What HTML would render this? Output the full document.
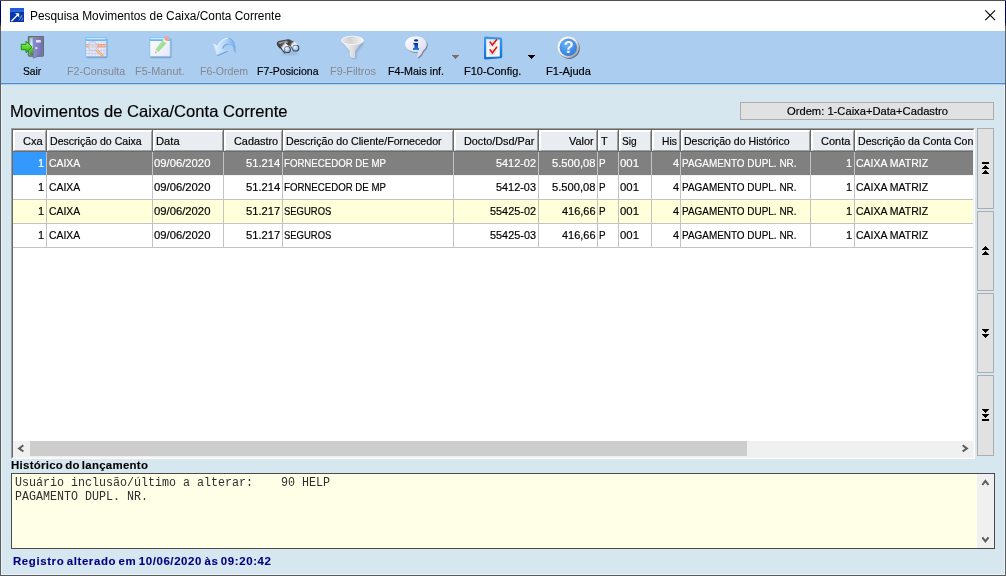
<!DOCTYPE html>
<html lang="pt-BR"><head><meta charset="utf-8"><title>Pesquisa Movimentos de Caixa/Conta Corrente</title>
<style>
html,body{margin:0;padding:0}
body{width:1006px;height:576px;overflow:hidden;position:relative;background:#d7e7f0;font-family:"Liberation Sans",sans-serif}
.a{position:absolute}
.hc{position:absolute;top:130px;height:21px;background:#e9edf1;box-sizing:border-box;border-top:2px solid #fff;border-left:2px solid #fff;border-right:1px solid #a0a0a0;border-bottom:1px solid #a0a0a0}
.vg{position:absolute;top:152px;height:96px;width:1px;background:#c3c3c3}
.hg{position:absolute;left:13px;width:960px;height:1px;background:#c3c3c3}
.nb{position:absolute;left:977px;width:17px;box-sizing:border-box;border:1px solid #adadad;background:#e1e1e1}
</style></head>
<body>
<div class="a" style="left:0;top:0;width:1006px;height:31px;background:#fff"></div>
<div class="a" style="left:0;top:31px;width:1006px;height:52px;background:#abcdf0"></div>
<div class="a" style="left:0;top:82px;width:1006px;height:1px;background:#b3d3f5"></div>
<div class="a" style="left:0;top:83px;width:1006px;height:1px;background:#4a8dc8"></div>
<div class="a" style="left:0;top:84px;width:1006px;height:1px;background:#b4d1ec"></div>
<svg class="a" style="left:0;top:0" width="1006" height="84" viewBox="0 0 1006 84">
<defs>
<linearGradient id="gApp" x1="0" y1="0" x2="0" y2="1"><stop offset="0" stop-color="#1f57cf"/><stop offset=".27" stop-color="#2c68db"/><stop offset=".3" stop-color="#0737ab"/><stop offset="1" stop-color="#0433a6"/></linearGradient>
<linearGradient id="gDoor" x1="0" y1="0" x2="1" y2="0"><stop offset="0" stop-color="#8d8fd0"/><stop offset="1" stop-color="#6e70b2"/></linearGradient>
<linearGradient id="gArr" x1="0" y1="0" x2="0" y2="1"><stop offset="0" stop-color="#9cf06a"/><stop offset="1" stop-color="#2fb414"/></linearGradient>
<linearGradient id="gSky" x1="0" y1="0" x2="0" y2="1"><stop offset="0" stop-color="#8fd0f6"/><stop offset=".55" stop-color="#f2fbff"/><stop offset=".6" stop-color="#6ed23a"/><stop offset="1" stop-color="#1d9a10"/></linearGradient>
<linearGradient id="gWin" x1="0" y1="0" x2="1" y2="1"><stop offset="0" stop-color="#ffffff"/><stop offset="1" stop-color="#ece8fb"/></linearGradient>
<linearGradient id="gPen" x1="0" y1="0" x2="1" y2="1"><stop offset="0" stop-color="#c6f2b4"/><stop offset="1" stop-color="#7fd56d"/></linearGradient>
<linearGradient id="gUndo" x1="0" y1="0" x2="1" y2="0"><stop offset="0" stop-color="#e2f0fd"/><stop offset=".55" stop-color="#b4d7fa"/><stop offset="1" stop-color="#74aef0"/></linearGradient>
<linearGradient id="gFun" x1="0" y1="0" x2="1" y2="0"><stop offset="0" stop-color="#f4f4f4"/><stop offset=".45" stop-color="#e3e3e3"/><stop offset="1" stop-color="#b7bbc1"/></linearGradient>
<linearGradient id="gFunIn" x1="0" y1="0" x2="1" y2="0"><stop offset="0" stop-color="#e6e6e6"/><stop offset=".4" stop-color="#d2d2d2"/><stop offset="1" stop-color="#f6f6f6"/></linearGradient>
<radialGradient id="gLens" cx=".4" cy=".35" r=".7"><stop offset="0" stop-color="#e8f4ff"/><stop offset="1" stop-color="#7fb8f2"/></radialGradient>
<linearGradient id="gBub" x1="0" y1="0" x2="1" y2="1"><stop offset="0" stop-color="#ffffff"/><stop offset="1" stop-color="#d6d3f6"/></linearGradient>
<linearGradient id="gI" x1="0" y1="0" x2="0" y2="1"><stop offset="0" stop-color="#062a9a"/><stop offset="1" stop-color="#1a86ea"/></linearGradient>
<radialGradient id="gHelp" cx=".4" cy=".35" r=".8"><stop offset="0" stop-color="#6db0f4"/><stop offset="1" stop-color="#2274dc"/></radialGradient>
<linearGradient id="gRing" x1="0" y1="0" x2="1" y2="1"><stop offset="0" stop-color="#ffffff"/><stop offset=".5" stop-color="#ece9e1"/><stop offset="1" stop-color="#8d8b87"/></linearGradient>
<linearGradient id="gChk" x1="0" y1="0" x2="0" y2="1"><stop offset="0" stop-color="#3b9cec"/><stop offset="1" stop-color="#0f6fd6"/></linearGradient>
<filter id="b4" x="-20%" y="-20%" width="140%" height="140%"><feGaussianBlur stdDeviation="0.45"/></filter>
<filter id="b7" x="-20%" y="-20%" width="140%" height="140%"><feGaussianBlur stdDeviation="0.8"/></filter>
<linearGradient id="gBarL" gradientUnits="userSpaceOnUse" x1="279.6" y1="43.2" x2="287.3" y2="49.6"><stop offset="0" stop-color="#3f3f41"/><stop offset=".3" stop-color="#5a5a5c"/><stop offset=".48" stop-color="#e4e4e4"/><stop offset=".8" stop-color="#ffffff"/><stop offset="1" stop-color="#d0d0d0"/></linearGradient>
<linearGradient id="gBarR" gradientUnits="userSpaceOnUse" x1="288.6" y1="41.6" x2="295.9" y2="48"><stop offset="0" stop-color="#3f3f41"/><stop offset=".3" stop-color="#5a5a5c"/><stop offset=".48" stop-color="#e4e4e4"/><stop offset=".8" stop-color="#ffffff"/><stop offset="1" stop-color="#d0d0d0"/></linearGradient>
</defs>

<!-- app icon -->
<rect x="10" y="8" width="14" height="14" fill="url(#gApp)"/>
<path d="M11.3 21.3 L17.6 15" stroke="#fff" stroke-width="1.3" fill="none"/>
<path d="M15.2 13.2 H19.2 V17.6 Z" fill="#fff"/>
<path d="M19 20.5l3-4.6M21.6 21l1.4-3.2M20.2 17.4l2.2-2.6" stroke="#9fbcf0" stroke-width=".9" opacity=".75" fill="none"/>
<!-- close X -->
<path d="M985.3 10.3 L995.1 20.1 M995.1 10.3 L985.3 20.1" stroke="#000" stroke-width="1.1" fill="none"/>

<!-- Sair : door -->
<g>
<path d="M29.2 37.2 h14 v18.6 l-1.2 1 h-12.8 z" fill="#7d7d80" filter="url(#b4)"/>
<rect x="27.8" y="35.9" width="16.2" height="20.6" rx="1" fill="#6a6a6d"/>
<rect x="29.2" y="37.2" width="13.6" height="18.2" fill="#a4a4a8"/>
<rect x="30.2" y="38.2" width="4" height="17" fill="url(#gSky)"/>
<path d="M33.2 38.3 L42.3 37.4 L42.3 54.6 L33.2 58.2 Z" fill="url(#gDoor)"/>
<path d="M33.2 38.3 L42.3 37.4 L42.3 54.6 L33.2 58.2 Z" fill="none" stroke="#6465aa" stroke-width=".6"/>
<rect x="36" y="40.1" width="4.8" height="2.4" fill="#e9e9fb"/>
<circle cx="36.4" cy="48.2" r="1.1" fill="#e5e4d6"/>
<path d="M21.3 44.3 H26 V41.2 L32.2 47 L26 52.8 V49.7 H21.3 Z" fill="url(#gArr)" stroke="#0f9a06" stroke-width="1" stroke-linejoin="round"/>
</g>

<!-- F2 Consulta : table + magnifier (disabled/faded) -->
<g opacity=".93">
<rect x="86.4" y="38.4" width="21.2" height="19.8" rx="1" fill="#7d93ad" opacity=".75" filter="url(#b4)"/>
<rect x="85.2" y="37" width="21.6" height="20" rx="1.2" fill="#7fc3fb"/>
<rect x="86.2" y="39.3" width="19.6" height="1.7" fill="#6ab6f6"/><rect x="86.6" y="38.2" width="18.6" height="1" fill="#e8f5ff"/>
<rect x="86.2" y="41" width="19.6" height="15" fill="#f4f0fd"/>
<g stroke="#cfcdea" stroke-width=".9">
<path d="M86.2 47.6h19.6M86.2 50.6h19.6M86.2 53.6h19.6M89.2 41v15M92.2 41v15M95.2 41v15M98.2 41v15M101.2 41v15M104 41v15"/>
</g>
<rect x="86.2" y="44" width="19.6" height="3.2" fill="#fb9a7c"/>
<g fill="#fbd9a0"><rect x="87" y="45" width="1.6" height="1.4"/><rect x="90" y="45" width="1.6" height="1.4"/><rect x="93" y="45" width="1.6" height="1.4"/><rect x="96" y="45" width="1.6" height="1.4"/><rect x="99" y="45" width="1.6" height="1.4"/><rect x="102" y="45" width="1.6" height="1.4"/><rect x="104.6" y="45" width="1" height="1.4"/></g>
<path d="M97.4 50.8 L102.3 55.3" stroke="#f3a565" stroke-width="2.5" stroke-linecap="round"/>
<path d="M97.6 51 L102.1 55.1" stroke="#fde29a" stroke-width=".9" stroke-linecap="round"/>
<circle cx="92.7" cy="46.2" r="4.6" fill="#d6eafb" fill-opacity=".66" stroke="#c3c6d0" stroke-width="1"/>
</g>

<!-- F5 Manut : window + pencil -->
<g opacity=".95">
<rect x="150.4" y="38.4" width="21.2" height="19.8" rx="1" fill="#7d93ad" opacity=".75" filter="url(#b4)"/>
<rect x="149.2" y="37" width="21.6" height="20" rx="1.2" fill="#86c7fc"/>
<rect x="150.2" y="39.3" width="19.6" height="1.7" fill="#63b3f6"/><rect x="150.6" y="38.2" width="18.6" height="1" fill="#e8f5ff"/>
<rect x="150.2" y="41" width="19.6" height="15" fill="url(#gWin)"/>
<path d="M155.9 49.4 L158.5 51.4 L155.1 53.3 Z" fill="#e8e2d2"/>
<path d="M155.1 53.3 l.5 -1.5 l1 .8 z" fill="#8a8a8a"/>
<path d="M155.9 49.4 L162.7 40.3 L166.3 43.2 L158.5 51.4 Z" fill="url(#gPen)" stroke="#9fdc90" stroke-width=".5"/>
<path d="M162.7 40.3 L164 38.7 L167.6 41.6 L166.3 43.2 Z" fill="#f7f7f7"/>
<ellipse cx="166.7" cy="38.6" rx="2.7" ry="2.2" transform="rotate(38 166.7 38.7)" fill="#f1a590"/>
</g>

<!-- F6 Ordem : undo arrow (faded) -->
<g>
<path d="M217.6 46.2 C219.5 41 224 38 228.4 38 C232.8 38.2 235.8 42.6 234.4 53 C233.6 47.6 231.6 43.6 227.6 43.6 C224.8 43.8 222.8 45.8 222 48.4 L227.4 50.6 L216.6 55.2 L213.2 43.4 Z" fill="#5a8bc8" opacity=".75" filter="url(#b4)" transform="translate(.8 1)"/>
<path d="M217.6 46.2 C219.5 41 224 38 228.4 38 C232.8 38.2 235.8 42.6 234.4 53 C233.6 47.6 231.6 43.6 227.6 43.6 C224.8 43.8 222.8 45.8 222 48.4 L227.4 50.6 L216.6 55.2 L213.2 43.4 Z" fill="url(#gUndo)" stroke="#a9d0f8" stroke-width=".5"/>
<path d="M228.4 38.3 C232.6 38.6 235.4 42.8 234.3 51.5" fill="none" stroke="#74abe9" stroke-width=".9"/>
<path d="M213.6 44 L217.4 46.6 C219.6 41.4 223.6 38.6 228 38.4" fill="none" stroke="#f4f9ff" stroke-width=".9"/>
</g>

<!-- F7 Posiciona : binoculars -->
<g>
<ellipse cx="290" cy="53.6" rx="8.5" ry="1.5" fill="#5d7fa8" opacity=".3" filter="url(#b7)"/>
<path d="M276.9 45 Q276.2 41.4 279.8 40.8 L286.6 39.4 Q289.8 39.1 291.8 40.8 L294 43.4 L285 47.8 L279.6 48.4 Z" fill="#454547"/>
<path d="M278.4 42.6 L286.6 40.6 L289 42.2 L280.2 46 Z" fill="#8e8e90"/>
<path d="M279.4 43 L285.8 41.6 L286.8 42.2 L280 44.2 Z" fill="#b9b9bb"/>
<path d="M288.2 41.8 L293.2 40.8 L299.4 46.2 L294 52 L289.6 46.6 Z" fill="url(#gBarR)"/>
<path d="M278.6 44.6 L284.2 42 L291 48 L285.2 53.6 L280.4 48.2 Z" fill="url(#gBarL)"/>
<path d="M278.4 44.8 L285 53.4" stroke="#3a3a3c" stroke-width="1.1" fill="none"/>
<path d="M288.6 42 L293.6 51.6" stroke="#3a3a3c" stroke-width="1" fill="none" opacity=".8"/>
<circle cx="287.5" cy="49.7" r="3.4" fill="#3c3c3e"/>
<circle cx="295.9" cy="48.2" r="3.4" fill="#3c3c3e"/>
<circle cx="287.2" cy="49.4" r="2.7" fill="url(#gLens)"/>
<circle cx="295.6" cy="47.9" r="2.7" fill="url(#gLens)"/>
</g>

<!-- F9 Filtros : funnel (faded white) -->
<g>
<path d="M342 41.6 L350.4 51.6 V57 Q352.6 58.8 355.4 57.6 V51.6 L363.6 41.6 Z" fill="#7391b3" opacity=".6" filter="url(#b7)" transform="translate(1 1)"/>
<path d="M341.4 40.6 L349.9 51.2 V56.6 Q352.4 58.8 355.1 57.4 V51.2 L363.4 40.6 Z" fill="url(#gFun)"/>
<ellipse cx="352.4" cy="40.4" rx="11" ry="4.2" fill="url(#gFunIn)" stroke="#f6f6f6" stroke-width=".9"/>
</g>

<!-- F4 Mais inf : speech bubble with i -->
<g>
<path d="M416 36.2 C422.4 36.2 426.8 39.8 426.8 44 C426.8 47.4 424.6 49.6 422.8 51 C421.6 54.6 419.2 57 416.6 57.8 C418 55.8 418.4 53.6 417.6 51.8 C410 52.6 405.2 48.6 405.2 44 C405.2 39.8 409.6 36.2 416 36.2 Z" fill="#64676f" opacity=".75" filter="url(#b4)" transform="translate(.9 .9)"/>
<path d="M416 36.2 C422.4 36.2 426.8 39.8 426.8 44 C426.8 47.4 424.6 49.6 422.8 51 C421.6 54.6 419.2 57 416.6 57.8 C418 55.8 418.4 53.6 417.6 51.8 C410 52.6 405.2 48.6 405.2 44 C405.2 39.8 409.6 36.2 416 36.2 Z" fill="url(#gBub)"/>
<ellipse cx="416.1" cy="40.4" rx="2.1" ry="1.2" fill="#0a2c9c"/>
<path d="M413.4 43 H418 V48 H419 V50 H413 V48 H414.4 V44.6 H413.4 Z" fill="url(#gI)"/>
</g>

<!-- F10 Config : checklist -->
<g>
<path d="M485 36.6 L500.6 37.6 Q502.2 37.8 502.2 39.4 V56.4 Q502.2 58 500.6 58.2 L485.6 59.6 Q484 59.6 484 58 V38 Q484 36.6 485 36.6 Z" fill="url(#gChk)"/>
<path d="M486.2 39.2 L499.8 39.8 V56.4 L486.2 57 Z" fill="#f7f5f3"/>
<path d="M486.2 39.2 L499.8 39.8 V41 L486.2 40.4 Z" fill="#e4e0dc"/>
<rect x="489.6" y="41.4" width="5.6" height="4.8" rx="1" fill="#efefef" stroke="#c9c9c9" stroke-width=".6"/>
<rect x="489.6" y="49.6" width="5.6" height="4.8" rx="1" fill="#efefef" stroke="#c9c9c9" stroke-width=".6"/>
<path d="M489.8 41.6 L492.4 45 L497 39.2" fill="none" stroke="#e01010" stroke-width="1.5"/>
<path d="M489.8 49.4 L492.4 53 L497 46.8" fill="none" stroke="#e01010" stroke-width="1.5"/>
</g>

<!-- F1 Ajuda : help circle -->
<g>
<circle cx="569.2" cy="48.3" r="10.7" fill="#4f5966" opacity=".75" filter="url(#b4)"/>
<circle cx="568.3" cy="47.3" r="10.7" fill="url(#gRing)"/>
<circle cx="568.3" cy="47.3" r="8.7" fill="url(#gHelp)"/>
<text x="568.5" y="53.2" text-anchor="middle" font-family="'Liberation Sans',sans-serif" font-weight="bold" font-size="16.5" fill="#f6f4ff">?</text>
</g>
</svg>

<div class="a" style="left:11px;top:128px;width:964px;height:331px;background:#fff;box-sizing:border-box;border:1px solid;border-color:#a0a0a0 #fff #fff #a0a0a0"></div>
<div class="a" style="left:12px;top:129px;width:962px;height:329px;box-sizing:border-box;border:1px solid;border-color:#696969 #f4f4f4 #f4f4f4 #696969"></div>
<div class="a" style="left:13px;top:130px;width:960px;height:22px;background:#6b6b6b"></div>
<div class="hc" style="left:13px;width:33px"></div>
<div class="hc" style="left:47px;width:105px"></div>
<div class="hc" style="left:153px;width:70px"></div>
<div class="hc" style="left:224px;width:58px"></div>
<div class="hc" style="left:283px;width:170px"></div>
<div class="hc" style="left:454px;width:84px"></div>
<div class="hc" style="left:539px;width:58px"></div>
<div class="hc" style="left:598px;width:20px"></div>
<div class="hc" style="left:619px;width:32px"></div>
<div class="hc" style="left:652px;width:28px"></div>
<div class="hc" style="left:681px;width:129px"></div>
<div class="hc" style="left:811px;width:43px"></div>
<div class="hc" style="left:855px;width:118px;border-right:none"></div>
<div class="a" style="left:13px;top:152px;width:960px;height:23px;background:#808080"></div>
<div class="a" style="left:13px;top:152px;width:33px;height:23px;background:#3399ff"></div>
<div class="hg" style="top:175px;background:#f4f4f4"></div>
<div class="a" style="left:13px;top:176px;width:960px;height:23px;background:#fff"></div>
<div class="hg" style="top:199px"></div>
<div class="a" style="left:13px;top:200px;width:960px;height:23px;background:#ffffd9"></div>
<div class="hg" style="top:223px"></div>
<div class="a" style="left:13px;top:224px;width:960px;height:23px;background:#fff"></div>
<div class="hg" style="top:247px"></div>
<div class="vg" style="left:46px"></div>
<div class="vg" style="left:152px"></div>
<div class="vg" style="left:223px"></div>
<div class="vg" style="left:282px"></div>
<div class="vg" style="left:453px"></div>
<div class="vg" style="left:538px"></div>
<div class="vg" style="left:597px"></div>
<div class="vg" style="left:618px"></div>
<div class="vg" style="left:651px"></div>
<div class="vg" style="left:680px"></div>
<div class="vg" style="left:810px"></div>
<div class="vg" style="left:854px"></div>
<div class="a" style="left:13px;top:441px;width:960px;height:16px;background:#f0f0f0"></div>
<div class="a" style="left:30px;top:441px;width:717px;height:15px;background:#cdcdcd"></div>
<svg class="a" style="left:13px;top:440px" width="17" height="17" viewBox="0 0 17 17"><path d="M10.4 5.3 L6.1 8.4 L10.4 11.5" fill="none" stroke="#5c5c5c" stroke-width="2"/></svg>
<svg class="a" style="left:956px;top:440px" width="17" height="17" viewBox="0 0 17 17"><path d="M6.6 5.3 L10.9 8.4 L6.6 11.5" fill="none" stroke="#5c5c5c" stroke-width="2"/></svg>
<div class="nb" style="top:128px;height:81px"></div>
<div class="nb" style="top:211px;height:80px"></div>
<div class="nb" style="top:293px;height:80px"></div>
<div class="nb" style="top:375px;height:81px"></div>
<svg class="a" style="left:0;top:0" width="1006" height="576" viewBox="0 0 1006 576" shape-rendering="crispEdges" fill="#000"><rect x="982" y="162" width="7" height="2"/><path d="M985 165h1v1h1v1h1v1h1v1h-7v-1h1v-1h1v-1h1z"/><path d="M985 170h1v1h1v1h1v1h1v1h-7v-1h1v-1h1v-1h1z"/><path d="M985 246h1v1h1v1h1v1h1v1h-7v-1h1v-1h1v-1h1z"/><path d="M985 251h1v1h1v1h1v1h1v1h-7v-1h1v-1h1v-1h1z"/><path d="M982 329h7v1h-1v1h-1v1h-1v1h-1v-1h-1v-1h-1v-1h-1z"/><path d="M982 334h7v1h-1v1h-1v1h-1v1h-1v-1h-1v-1h-1v-1h-1z"/><path d="M982 409h7v1h-1v1h-1v1h-1v1h-1v-1h-1v-1h-1v-1h-1z"/><path d="M982 414h7v1h-1v1h-1v1h-1v1h-1v-1h-1v-1h-1v-1h-1z"/><rect x="982" y="419" width="7" height="2"/><g fill="#76716c"><path d="M452 55h7v1h-1v1h-1v1h-1v1h-1v-1h-1v-1h-1v-1h-1z"/></g><path d="M528 55h7v1h-1v1h-1v1h-1v1h-1v-1h-1v-1h-1v-1h-1z"/></svg>
<div class="a" style="left:740px;top:102px;width:254px;height:18px;box-sizing:border-box;border:1px solid #adadad;background:#e1e1e1"></div>
<div class="a" style="left:11px;top:473px;width:984px;height:76px;box-sizing:border-box;border:1px solid #4b4b4b;background:#ffffe8"></div>
<div class="a" style="left:977px;top:474px;width:17px;height:74px;background:#f0f0f0"></div>
<svg class="a" style="left:977px;top:474px" width="17" height="74" viewBox="0 0 17 74"><path d="M5.3 11 L8.4 7 L11.5 11 M5.3 63.4 L8.4 67.4 L11.5 63.4" fill="none" stroke="#5c5c5c" stroke-width="2"/></svg>
<span style="font:normal 12px/16px 'Liberation Sans', sans-serif;color:#000;position:absolute;white-space:pre;left:30.3px;top:7.84px;transform:scaleX(0.9903);transform-origin:0 0;">Pesquisa Movimentos de Caixa/Conta Corrente</span>
<span style="font:normal 11px/15px 'Liberation Sans', sans-serif;color:#000;position:absolute;white-space:pre;left:23.2px;top:63.69px;transform:scaleX(0.9355);transform-origin:0 0;-webkit-text-stroke:.18px #000;">Sair</span>
<span style="font:normal 11px/15px 'Liberation Sans', sans-serif;color:#85878f;position:absolute;white-space:pre;left:67.2px;top:63.69px;transform:scaleX(0.9729);transform-origin:0 0;">F2-Consulta</span>
<span style="font:normal 11px/15px 'Liberation Sans', sans-serif;color:#85878f;position:absolute;white-space:pre;left:135.0px;top:63.69px;transform:scaleX(0.9872);transform-origin:0 0;">F5-Manut.</span>
<span style="font:normal 11px/15px 'Liberation Sans', sans-serif;color:#85878f;position:absolute;white-space:pre;left:200.4px;top:63.69px;transform:scaleX(0.9596);transform-origin:0 0;">F6-Ordem</span>
<span style="font:normal 11px/15px 'Liberation Sans', sans-serif;color:#000;position:absolute;white-space:pre;left:257.3px;top:63.69px;transform:scaleX(0.9579);transform-origin:0 0;-webkit-text-stroke:.18px #000;">F7-Posiciona</span>
<span style="font:normal 11px/15px 'Liberation Sans', sans-serif;color:#85878f;position:absolute;white-space:pre;left:329.9px;top:63.69px;transform:scaleX(0.9881);transform-origin:0 0;">F9-Filtros</span>
<span style="font:normal 11px/15px 'Liberation Sans', sans-serif;color:#000;position:absolute;white-space:pre;left:388.1px;top:63.69px;transform:scaleX(0.9762);transform-origin:0 0;-webkit-text-stroke:.18px #000;">F4-Mais inf.</span>
<span style="font:normal 11px/15px 'Liberation Sans', sans-serif;color:#000;position:absolute;white-space:pre;left:463.8px;top:63.69px;transform:scaleX(0.9985);transform-origin:0 0;-webkit-text-stroke:.18px #000;">F10-Config.</span>
<span style="font:normal 11px/15px 'Liberation Sans', sans-serif;color:#000;position:absolute;white-space:pre;left:546.0px;top:63.69px;transform:scaleX(1.0058);transform-origin:0 0;-webkit-text-stroke:.18px #000;">F1-Ajuda</span>
<span style="font:normal 16.5px/20.5px 'Liberation Sans', sans-serif;color:#000;position:absolute;white-space:pre;left:10.4px;top:100.63px;transform:scaleX(1.0053);transform-origin:0 0;-webkit-text-stroke:.18px #000;">Movimentos de Caixa/Conta Corrente</span>
<span style="font:normal 11px/15px 'Liberation Sans', sans-serif;color:#000;position:absolute;white-space:pre;left:787.0px;top:103.69px;transform:scaleX(1.0167);transform-origin:0 0;-webkit-text-stroke:.18px #000;">Ordem: 1-Caixa+Data+Cadastro</span>
<span style="font:normal 11px/15px 'Liberation Sans', sans-serif;color:#000;position:absolute;white-space:pre;left:22.9px;top:133.69px;transform:scaleX(1.0121);transform-origin:0 0;-webkit-text-stroke:.18px #000;">Cxa</span>
<span style="font:normal 11px/15px 'Liberation Sans', sans-serif;color:#000;position:absolute;white-space:pre;left:50.0px;top:133.69px;transform:scaleX(0.9615);transform-origin:0 0;-webkit-text-stroke:.18px #000;">Descrição do Caixa</span>
<span style="font:normal 11px/15px 'Liberation Sans', sans-serif;color:#000;position:absolute;white-space:pre;left:155.9px;top:133.69px;transform:scaleX(1.0151);transform-origin:0 0;-webkit-text-stroke:.18px #000;">Data</span>
<span style="font:normal 11px/15px 'Liberation Sans', sans-serif;color:#000;position:absolute;white-space:pre;left:234.4px;top:133.69px;transform:scaleX(0.9879);transform-origin:0 0;-webkit-text-stroke:.18px #000;">Cadastro</span>
<span style="font:normal 11px/15px 'Liberation Sans', sans-serif;color:#000;position:absolute;white-space:pre;left:285.9px;top:133.69px;transform:scaleX(0.9676);transform-origin:0 0;-webkit-text-stroke:.18px #000;">Descrição do Cliente/Fornecedor</span>
<span style="font:normal 11px/15px 'Liberation Sans', sans-serif;color:#000;position:absolute;white-space:pre;left:464.3px;top:133.69px;transform:scaleX(0.9842);transform-origin:0 0;-webkit-text-stroke:.18px #000;">Docto/Dsd/Par</span>
<span style="font:normal 11px/15px 'Liberation Sans', sans-serif;color:#000;position:absolute;white-space:pre;left:569.2px;top:133.69px;transform:scaleX(0.9889);transform-origin:0 0;-webkit-text-stroke:.18px #000;">Valor</span>
<span style="font:normal 11px/15px 'Liberation Sans', sans-serif;color:#000;position:absolute;white-space:pre;left:600.7px;top:133.69px;transform:scaleX(0.9800);transform-origin:0 0;-webkit-text-stroke:.18px #000;">T</span>
<span style="font:normal 11px/15px 'Liberation Sans', sans-serif;color:#000;position:absolute;white-space:pre;left:622.0px;top:133.69px;transform:scaleX(0.9242);transform-origin:0 0;-webkit-text-stroke:.18px #000;">Sig</span>
<span style="font:normal 11px/15px 'Liberation Sans', sans-serif;color:#000;position:absolute;white-space:pre;left:661.9px;top:133.69px;transform:scaleX(0.9377);transform-origin:0 0;-webkit-text-stroke:.18px #000;">His</span>
<span style="font:normal 11px/15px 'Liberation Sans', sans-serif;color:#000;position:absolute;white-space:pre;left:684.3px;top:133.69px;transform:scaleX(0.9596);transform-origin:0 0;-webkit-text-stroke:.18px #000;">Descrição do Histórico</span>
<span style="font:normal 11px/15px 'Liberation Sans', sans-serif;color:#000;position:absolute;white-space:pre;left:821.1px;top:133.69px;transform:scaleX(0.9980);transform-origin:0 0;-webkit-text-stroke:.18px #000;">Conta</span>
<div style="position:absolute;left:0;top:0;width:973.0px;height:576px;overflow:hidden"><span style="font:normal 11px/15px 'Liberation Sans', sans-serif;color:#000;position:absolute;white-space:pre;left:858.1px;top:133.69px;transform:scaleX(0.9629);transform-origin:0 0;-webkit-text-stroke:.18px #000;">Descrição da Conta Con</span></div>
<span style="font:normal 11px/15px 'Liberation Sans', sans-serif;color:#fff;position:absolute;white-space:pre;left:37.9px;top:155.69px;transform:scaleX(0.9959);transform-origin:0 0;-webkit-text-stroke:.18px #fff;">1</span>
<span style="font:normal 11px/15px 'Liberation Sans', sans-serif;color:#fff;position:absolute;white-space:pre;left:48.5px;top:155.69px;transform:scaleX(0.9450);transform-origin:0 0;-webkit-text-stroke:.18px #fff;">CAIXA</span>
<span style="font:normal 11px/15px 'Liberation Sans', sans-serif;color:#fff;position:absolute;white-space:pre;left:154.1px;top:155.69px;transform:scaleX(1.0243);transform-origin:0 0;-webkit-text-stroke:.18px #fff;">09/06/2020</span>
<span style="font:normal 11px/15px 'Liberation Sans', sans-serif;color:#fff;position:absolute;white-space:pre;left:246.2px;top:155.69px;transform:scaleX(1.0191);transform-origin:0 0;-webkit-text-stroke:.18px #fff;">51.214</span>
<span style="font:normal 11px/15px 'Liberation Sans', sans-serif;color:#fff;position:absolute;white-space:pre;left:284.3px;top:155.69px;transform:scaleX(0.8775);transform-origin:0 0;-webkit-text-stroke:.18px #fff;">FORNECEDOR DE MP</span>
<span style="font:normal 11px/15px 'Liberation Sans', sans-serif;color:#fff;position:absolute;white-space:pre;left:496.0px;top:155.69px;transform:scaleX(0.9907);transform-origin:0 0;-webkit-text-stroke:.18px #fff;">5412-02</span>
<span style="font:normal 11px/15px 'Liberation Sans', sans-serif;color:#fff;position:absolute;white-space:pre;left:551.5px;top:155.69px;transform:scaleX(1.0157);transform-origin:0 0;-webkit-text-stroke:.18px #fff;">5.500,08</span>
<span style="font:normal 11px/15px 'Liberation Sans', sans-serif;color:#fff;position:absolute;white-space:pre;left:599.0px;top:155.69px;transform:scaleX(0.8987);transform-origin:0 0;-webkit-text-stroke:.18px #fff;">P</span>
<span style="font:normal 11px/15px 'Liberation Sans', sans-serif;color:#fff;position:absolute;white-space:pre;left:620.1px;top:155.69px;transform:scaleX(1.0349);transform-origin:0 0;-webkit-text-stroke:.18px #fff;">001</span>
<span style="font:normal 11px/15px 'Liberation Sans', sans-serif;color:#fff;position:absolute;white-space:pre;left:672.7px;top:155.69px;transform:scaleX(0.9959);transform-origin:0 0;-webkit-text-stroke:.18px #fff;">4</span>
<span style="font:normal 11px/15px 'Liberation Sans', sans-serif;color:#fff;position:absolute;white-space:pre;left:682.4px;top:155.69px;transform:scaleX(0.9035);transform-origin:0 0;-webkit-text-stroke:.18px #fff;">PAGAMENTO DUPL. NR.</span>
<span style="font:normal 11px/15px 'Liberation Sans', sans-serif;color:#fff;position:absolute;white-space:pre;left:845.9px;top:155.69px;transform:scaleX(0.9959);transform-origin:0 0;-webkit-text-stroke:.18px #fff;">1</span>
<span style="font:normal 11px/15px 'Liberation Sans', sans-serif;color:#fff;position:absolute;white-space:pre;left:856.4px;top:155.69px;transform:scaleX(0.9551);transform-origin:0 0;-webkit-text-stroke:.18px #fff;">CAIXA MATRIZ</span>
<span style="font:normal 11px/15px 'Liberation Sans', sans-serif;color:#000;position:absolute;white-space:pre;left:37.9px;top:179.69px;transform:scaleX(0.9959);transform-origin:0 0;-webkit-text-stroke:.18px #000;">1</span>
<span style="font:normal 11px/15px 'Liberation Sans', sans-serif;color:#000;position:absolute;white-space:pre;left:48.5px;top:179.69px;transform:scaleX(0.9450);transform-origin:0 0;-webkit-text-stroke:.18px #000;">CAIXA</span>
<span style="font:normal 11px/15px 'Liberation Sans', sans-serif;color:#000;position:absolute;white-space:pre;left:154.1px;top:179.69px;transform:scaleX(1.0243);transform-origin:0 0;-webkit-text-stroke:.18px #000;">09/06/2020</span>
<span style="font:normal 11px/15px 'Liberation Sans', sans-serif;color:#000;position:absolute;white-space:pre;left:246.2px;top:179.69px;transform:scaleX(1.0191);transform-origin:0 0;-webkit-text-stroke:.18px #000;">51.214</span>
<span style="font:normal 11px/15px 'Liberation Sans', sans-serif;color:#000;position:absolute;white-space:pre;left:284.3px;top:179.69px;transform:scaleX(0.8775);transform-origin:0 0;-webkit-text-stroke:.18px #000;">FORNECEDOR DE MP</span>
<span style="font:normal 11px/15px 'Liberation Sans', sans-serif;color:#000;position:absolute;white-space:pre;left:496.0px;top:179.69px;transform:scaleX(0.9907);transform-origin:0 0;-webkit-text-stroke:.18px #000;">5412-03</span>
<span style="font:normal 11px/15px 'Liberation Sans', sans-serif;color:#000;position:absolute;white-space:pre;left:551.5px;top:179.69px;transform:scaleX(1.0157);transform-origin:0 0;-webkit-text-stroke:.18px #000;">5.500,08</span>
<span style="font:normal 11px/15px 'Liberation Sans', sans-serif;color:#000;position:absolute;white-space:pre;left:599.0px;top:179.69px;transform:scaleX(0.8987);transform-origin:0 0;-webkit-text-stroke:.18px #000;">P</span>
<span style="font:normal 11px/15px 'Liberation Sans', sans-serif;color:#000;position:absolute;white-space:pre;left:620.1px;top:179.69px;transform:scaleX(1.0349);transform-origin:0 0;-webkit-text-stroke:.18px #000;">001</span>
<span style="font:normal 11px/15px 'Liberation Sans', sans-serif;color:#000;position:absolute;white-space:pre;left:672.7px;top:179.69px;transform:scaleX(0.9959);transform-origin:0 0;-webkit-text-stroke:.18px #000;">4</span>
<span style="font:normal 11px/15px 'Liberation Sans', sans-serif;color:#000;position:absolute;white-space:pre;left:682.4px;top:179.69px;transform:scaleX(0.9035);transform-origin:0 0;-webkit-text-stroke:.18px #000;">PAGAMENTO DUPL. NR.</span>
<span style="font:normal 11px/15px 'Liberation Sans', sans-serif;color:#000;position:absolute;white-space:pre;left:845.9px;top:179.69px;transform:scaleX(0.9959);transform-origin:0 0;-webkit-text-stroke:.18px #000;">1</span>
<span style="font:normal 11px/15px 'Liberation Sans', sans-serif;color:#000;position:absolute;white-space:pre;left:856.4px;top:179.69px;transform:scaleX(0.9551);transform-origin:0 0;-webkit-text-stroke:.18px #000;">CAIXA MATRIZ</span>
<span style="font:normal 11px/15px 'Liberation Sans', sans-serif;color:#000;position:absolute;white-space:pre;left:37.9px;top:203.69px;transform:scaleX(0.9959);transform-origin:0 0;-webkit-text-stroke:.18px #000;">1</span>
<span style="font:normal 11px/15px 'Liberation Sans', sans-serif;color:#000;position:absolute;white-space:pre;left:48.5px;top:203.69px;transform:scaleX(0.9450);transform-origin:0 0;-webkit-text-stroke:.18px #000;">CAIXA</span>
<span style="font:normal 11px/15px 'Liberation Sans', sans-serif;color:#000;position:absolute;white-space:pre;left:154.1px;top:203.69px;transform:scaleX(1.0243);transform-origin:0 0;-webkit-text-stroke:.18px #000;">09/06/2020</span>
<span style="font:normal 11px/15px 'Liberation Sans', sans-serif;color:#000;position:absolute;white-space:pre;left:246.2px;top:203.69px;transform:scaleX(1.0191);transform-origin:0 0;-webkit-text-stroke:.18px #000;">51.217</span>
<span style="font:normal 11px/15px 'Liberation Sans', sans-serif;color:#000;position:absolute;white-space:pre;left:284.3px;top:203.69px;transform:scaleX(0.8598);transform-origin:0 0;-webkit-text-stroke:.18px #000;">SEGUROS</span>
<span style="font:normal 11px/15px 'Liberation Sans', sans-serif;color:#000;position:absolute;white-space:pre;left:490.0px;top:203.69px;transform:scaleX(0.9892);transform-origin:0 0;-webkit-text-stroke:.18px #000;">55425-02</span>
<span style="font:normal 11px/15px 'Liberation Sans', sans-serif;color:#000;position:absolute;white-space:pre;left:561.5px;top:203.69px;transform:scaleX(0.9954);transform-origin:0 0;-webkit-text-stroke:.18px #000;">416,66</span>
<span style="font:normal 11px/15px 'Liberation Sans', sans-serif;color:#000;position:absolute;white-space:pre;left:599.0px;top:203.69px;transform:scaleX(0.8987);transform-origin:0 0;-webkit-text-stroke:.18px #000;">P</span>
<span style="font:normal 11px/15px 'Liberation Sans', sans-serif;color:#000;position:absolute;white-space:pre;left:620.1px;top:203.69px;transform:scaleX(1.0349);transform-origin:0 0;-webkit-text-stroke:.18px #000;">001</span>
<span style="font:normal 11px/15px 'Liberation Sans', sans-serif;color:#000;position:absolute;white-space:pre;left:672.7px;top:203.69px;transform:scaleX(0.9959);transform-origin:0 0;-webkit-text-stroke:.18px #000;">4</span>
<span style="font:normal 11px/15px 'Liberation Sans', sans-serif;color:#000;position:absolute;white-space:pre;left:682.4px;top:203.69px;transform:scaleX(0.9035);transform-origin:0 0;-webkit-text-stroke:.18px #000;">PAGAMENTO DUPL. NR.</span>
<span style="font:normal 11px/15px 'Liberation Sans', sans-serif;color:#000;position:absolute;white-space:pre;left:845.9px;top:203.69px;transform:scaleX(0.9959);transform-origin:0 0;-webkit-text-stroke:.18px #000;">1</span>
<span style="font:normal 11px/15px 'Liberation Sans', sans-serif;color:#000;position:absolute;white-space:pre;left:856.4px;top:203.69px;transform:scaleX(0.9551);transform-origin:0 0;-webkit-text-stroke:.18px #000;">CAIXA MATRIZ</span>
<span style="font:normal 11px/15px 'Liberation Sans', sans-serif;color:#000;position:absolute;white-space:pre;left:37.9px;top:227.69px;transform:scaleX(0.9959);transform-origin:0 0;-webkit-text-stroke:.18px #000;">1</span>
<span style="font:normal 11px/15px 'Liberation Sans', sans-serif;color:#000;position:absolute;white-space:pre;left:48.5px;top:227.69px;transform:scaleX(0.9450);transform-origin:0 0;-webkit-text-stroke:.18px #000;">CAIXA</span>
<span style="font:normal 11px/15px 'Liberation Sans', sans-serif;color:#000;position:absolute;white-space:pre;left:154.1px;top:227.69px;transform:scaleX(1.0243);transform-origin:0 0;-webkit-text-stroke:.18px #000;">09/06/2020</span>
<span style="font:normal 11px/15px 'Liberation Sans', sans-serif;color:#000;position:absolute;white-space:pre;left:246.2px;top:227.69px;transform:scaleX(1.0191);transform-origin:0 0;-webkit-text-stroke:.18px #000;">51.217</span>
<span style="font:normal 11px/15px 'Liberation Sans', sans-serif;color:#000;position:absolute;white-space:pre;left:284.3px;top:227.69px;transform:scaleX(0.8598);transform-origin:0 0;-webkit-text-stroke:.18px #000;">SEGUROS</span>
<span style="font:normal 11px/15px 'Liberation Sans', sans-serif;color:#000;position:absolute;white-space:pre;left:490.0px;top:227.69px;transform:scaleX(0.9892);transform-origin:0 0;-webkit-text-stroke:.18px #000;">55425-03</span>
<span style="font:normal 11px/15px 'Liberation Sans', sans-serif;color:#000;position:absolute;white-space:pre;left:561.5px;top:227.69px;transform:scaleX(0.9954);transform-origin:0 0;-webkit-text-stroke:.18px #000;">416,66</span>
<span style="font:normal 11px/15px 'Liberation Sans', sans-serif;color:#000;position:absolute;white-space:pre;left:599.0px;top:227.69px;transform:scaleX(0.8987);transform-origin:0 0;-webkit-text-stroke:.18px #000;">P</span>
<span style="font:normal 11px/15px 'Liberation Sans', sans-serif;color:#000;position:absolute;white-space:pre;left:620.1px;top:227.69px;transform:scaleX(1.0349);transform-origin:0 0;-webkit-text-stroke:.18px #000;">001</span>
<span style="font:normal 11px/15px 'Liberation Sans', sans-serif;color:#000;position:absolute;white-space:pre;left:672.7px;top:227.69px;transform:scaleX(0.9959);transform-origin:0 0;-webkit-text-stroke:.18px #000;">4</span>
<span style="font:normal 11px/15px 'Liberation Sans', sans-serif;color:#000;position:absolute;white-space:pre;left:682.4px;top:227.69px;transform:scaleX(0.9035);transform-origin:0 0;-webkit-text-stroke:.18px #000;">PAGAMENTO DUPL. NR.</span>
<span style="font:normal 11px/15px 'Liberation Sans', sans-serif;color:#000;position:absolute;white-space:pre;left:845.9px;top:227.69px;transform:scaleX(0.9959);transform-origin:0 0;-webkit-text-stroke:.18px #000;">1</span>
<span style="font:normal 11px/15px 'Liberation Sans', sans-serif;color:#000;position:absolute;white-space:pre;left:856.4px;top:227.69px;transform:scaleX(0.9551);transform-origin:0 0;-webkit-text-stroke:.18px #000;">CAIXA MATRIZ</span>
<span style="font:bold 11px/15px 'Liberation Sans', sans-serif;color:#000;position:absolute;white-space:pre;left:11.0px;top:457.69px;transform:scaleX(1.04);transform-origin:0 0;letter-spacing:0.268px;word-spacing:-1.3px;-webkit-text-stroke:.12px #000;">Histórico do lançamento</span>
<span style="font:normal 12px/16px 'Liberation Mono', monospace;color:#2e2e2e;position:absolute;white-space:pre;left:15.0px;top:474.80px;transform:scaleX(0.9720);transform-origin:0 0;">Usuário inclusão/último a alterar:    90 HELP</span>
<span style="font:normal 12px/16px 'Liberation Mono', monospace;color:#2e2e2e;position:absolute;white-space:pre;left:15.0px;top:488.80px;transform:scaleX(0.9720);transform-origin:0 0;">PAGAMENTO DUPL. NR.</span>
<span style="font:bold 11px/15px 'Liberation Sans', sans-serif;color:#000080;position:absolute;white-space:pre;left:13.0px;top:553.69px;transform:scaleX(1.04);transform-origin:0 0;letter-spacing:0.585px;word-spacing:-1.3px;-webkit-text-stroke:.12px #000080;">Registro alterado em 10/06/2020 às 09:20:42</span>
<div class="a" style="left:0;top:0;width:1006px;height:1px;background:#4f4f4f"></div>
<div class="a" style="left:0;top:575px;width:1006px;height:1px;background:#5a5a5a"></div>
<div class="a" style="left:0;top:1px;width:1px;height:575px;background:#5e5e5e"></div>
<div class="a" style="left:1005px;top:1px;width:1px;height:575px;background:#5e5e5e"></div>
<div class="a" style="left:0;top:1px;width:1px;height:22px;background:#00006e"></div>
<div class="a" style="left:1005px;top:1px;width:1px;height:22px;background:#00006e"></div>
<div class="a" style="left:0;top:23px;width:1px;height:3px;background:#2c2c2c"></div>
<div class="a" style="left:1005px;top:23px;width:1px;height:3px;background:#2c2c2c"></div>
<div class="a" style="left:1px;top:85px;width:1px;height:490px;background:#e8f2f8"></div>
<div class="a" style="left:1004px;top:85px;width:1px;height:490px;background:#e8f2f8"></div>
<div class="a" style="left:1px;top:574px;width:1004px;height:1px;background:#e8f2f8"></div>
</body></html>
